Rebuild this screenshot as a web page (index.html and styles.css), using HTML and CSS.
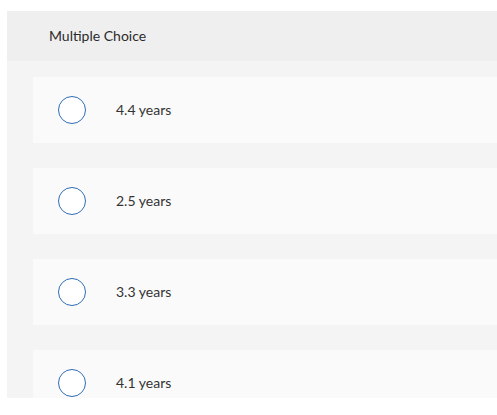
FILE: index.html
```html
<!DOCTYPE html>
<html>
<head>
<meta charset="utf-8">
<link rel="stylesheet" href="styles.css">
</head>
<body>
<div class="panel">
  <div class="panel-header">Multiple Choice</div>
  <div class="panel-body">
    <div class="option"><span class="radio"></span><span class="label">4.4 years</span></div>
    <div class="option"><span class="radio"></span><span class="label">2.5 years</span></div>
    <div class="option"><span class="radio"></span><span class="label">3.3 years</span></div>
    <div class="option"><span class="radio"></span><span class="label">4.1 years</span></div>
  </div>
</div>
</body>
</html>
```
FILE: styles.css
```css
html, body {
  margin: 0;
  padding: 0;
  background: #ffffff;
  overflow: hidden;
}
body {
  font-family: Lato, "Open Sans", sans-serif;
  color: #333333;
}
.panel {
  margin: 11px 0 0 7px;
  height: 387px;
  overflow: hidden;
  background: #f4f4f4;
}
.panel-header {
  height: 50px;
  box-sizing: border-box;
  padding-bottom: 2px;
  background: #efefef;
  display: flex;
  align-items: center;
  padding-left: 42px;
  font-size: 14px;
  color: #2b2b2b;
}
.panel-body {
  padding: 16px 0 0 26px;
  display: flex;
  flex-direction: column;
  gap: 25px;
}
.option {
  height: 66px;
  background: #fafafa;
  display: flex;
  align-items: center;
  padding-left: 25px;
  flex-shrink: 0;
}
.radio {
  width: 26px;
  height: 26px;
  border: 1px solid #2e6db4;
  border-radius: 50%;
  background: #ffffff;
  flex-shrink: 0;
}
.label {
  margin-left: 30px;
  margin-bottom: 2px;
  font-size: 14px;
  color: #333333;
}
```
